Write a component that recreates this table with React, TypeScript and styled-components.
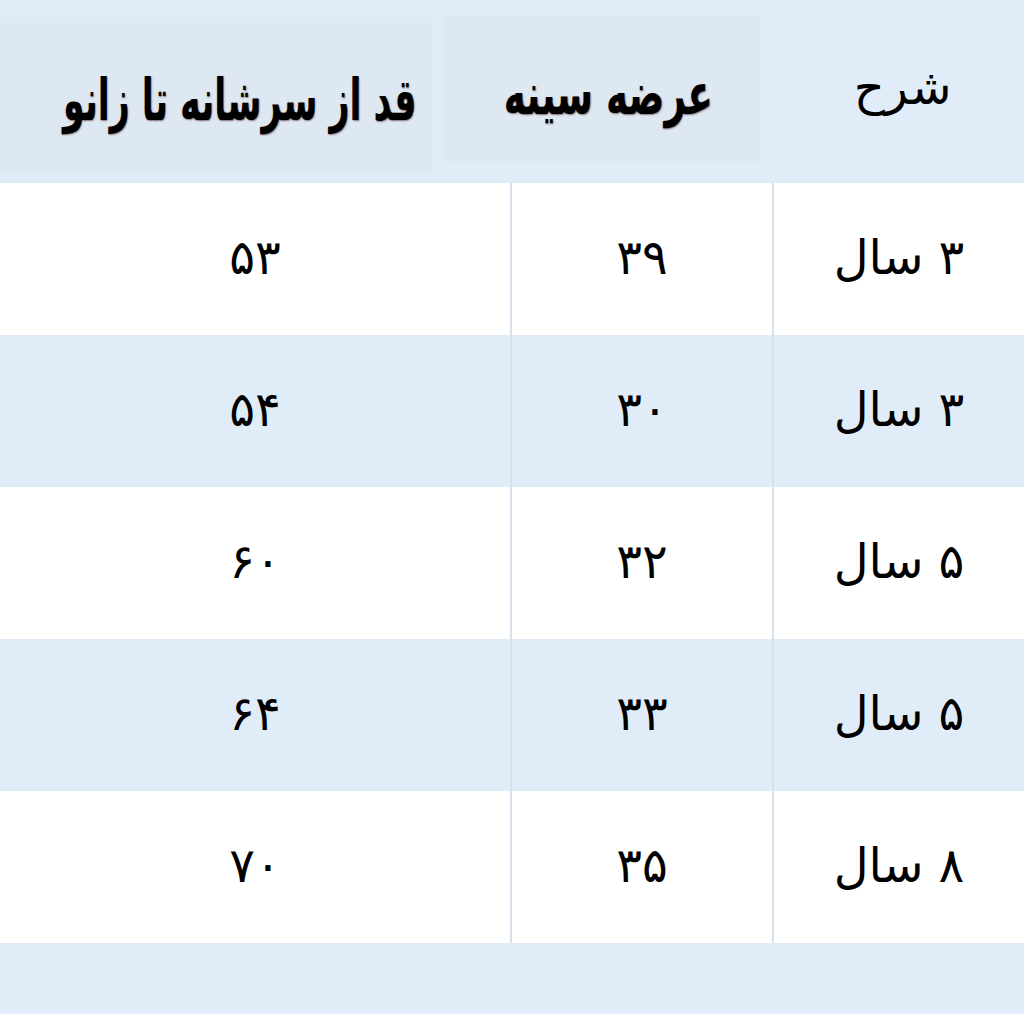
import React from 'react';
import styled, { createGlobalStyle } from 'styled-components';

const rows = [
  { age: '۳ سال', chest: '۳۹', length: '۵۳' },
  { age: '۳ سال', chest: '۳۰', length: '۵۴' },
  { age: '۵ سال', chest: '۳۲', length: '۶۰' },
  { age: '۵ سال', chest: '۳۳', length: '۶۴' },
  { age: '۸ سال', chest: '۳۵', length: '۷۰' },
];

export default function App() {
  return (
    <>
      <GlobalStyle />
      <Page dir='rtl'>
        <HeaderRow>
          <PlainHead>شرح</PlainHead>
          <HeadBox $width={317} $height={146} $top={16} $shift={14}>
            <BoldTitle $scale={0.64}>عرضه سینه</BoldTitle>
          </HeadBox>
          <HeadBox $width={432} $height={155} $top={17} $shift={48}>
            <BoldTitle $scale={0.6}>قد از سرشانه تا زانو</BoldTitle>
          </HeadBox>
        </HeaderRow>
        <Table>
          {rows.map((row, idx) => (
            <Row key={idx}>
              <Cell $striped={idx % 2 === 1}>{row.age}</Cell>
              <Cell $striped={idx % 2 === 1}>{row.chest}</Cell>
              <Cell $striped={idx % 2 === 1}>{row.length}</Cell>
            </Row>
          ))}
        </Table>
      </Page>
    </>
  );
}

const GlobalStyle = createGlobalStyle`
  html, body {
    margin: 0;
    padding: 0;
    background: #e0ecf7;
  }
  body {
    font-family: 'DejaVu Sans', 'Noto Sans', sans-serif;
    color: #000;
  }
`;

const Page = styled.div`
  width: 1024px;
  height: 1014px;
  background: #e0ecf7;
  overflow: hidden;
`;

const HeaderRow = styled.div`
  display: flex;
  align-items: flex-start;
  gap: 11px;
  height: 183px;
`;

const PlainHead = styled.div`
  width: 264px;
  height: 183px;
  display: flex;
  align-items: center;
  justify-content: center;
  padding-left: 10px;
  box-sizing: border-box;
  padding-bottom: 10px;
  font-size: 48px;
`;

const HeadBox = styled.div<{ $width: number; $height: number; $top: number; $shift: number }>`
  width: ${(p) => p.$width}px;
  height: ${(p) => p.$height}px;
  margin-top: ${(p) => p.$top}px;
  padding-left: ${(p) => p.$shift}px;
  padding-top: 10px;
  box-sizing: border-box;
  background: #dde8f3;
  display: flex;
  align-items: center;
  justify-content: center;
`;

const BoldTitle = styled.span<{ $scale: number }>`
  font-size: 58px;
  font-weight: 700;
  display: inline-block;
  transform: scaleX(${(p) => p.$scale});
  text-shadow: 1px 1px 2px rgba(70, 20, 20, 0.55);
  white-space: nowrap;
`;

const Table = styled.div`
  display: flex;
  flex-direction: column;
`;

const Row = styled.div`
  display: grid;
  grid-template-columns: 250px 260px 510px;
  column-gap: 2px;
  height: 152px;
  background: #d6e3ef;
`;

const Cell = styled.div<{ $striped: boolean }>`
  display: flex;
  align-items: center;
  justify-content: center;
  background: ${(p) => (p.$striped ? '#e0ecf7' : '#ffffff')};
  font-size: 48px;
  padding-bottom: 4px;
`;
